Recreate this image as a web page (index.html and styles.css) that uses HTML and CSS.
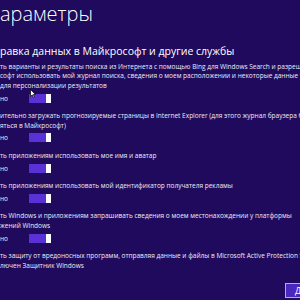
FILE: index.html
```html
<!DOCTYPE html>
<html>
<head>
	<title>Параметры</title>
	<link rel="stylesheet" href="styles.css">
</head>
<body>
	<div class="page">
		<h1 class="title">араметры</h1>
		<h2 class="heading">равка данных в Майкрософт и другие службы</h2>

		<div class="item">
			<p class="lines">ть варианты и результаты поиска из Интернета с помощью Bing для Windows Search и разрешить<br>софт использовать мой журнал поиска, сведения о моем расположении и некоторые данные учетной записи<br>для персонализации результатов</p>
			<div class="state"><span class="state-label">но</span><span class="toggle"><span class="thumb"></span></span></div>
		</div>

		<div class="item">
			<p class="lines">ительно загружать прогнозируемые страницы в Internet Explorer (для этого журнал браузера будет<br>яться в Майкрософт)</p>
			<div class="state"><span class="state-label">но</span><span class="toggle"><span class="thumb"></span></span></div>
		</div>

		<div class="item">
			<p class="lines">ть приложениям использовать мое имя и аватар</p>
			<div class="state"><span class="state-label">но</span><span class="toggle"><span class="thumb"></span></span></div>
		</div>

		<div class="item">
			<p class="lines">ть приложениям использовать мой идентификатор получателя рекламы</p>
			<div class="state"><span class="state-label">но</span><span class="toggle"><span class="thumb"></span></span></div>
		</div>

		<div class="item">
			<p class="lines">ть Windows и приложениям запрашивать сведения о моем местонахождении у платформы<br>жений Windows</p>
			<div class="state"><span class="state-label">но</span><span class="toggle"><span class="thumb"></span></span></div>
		</div>

		<div class="item">
			<p class="lines">ть защиту от вредоносных программ, отправляя данные и файлы в Microsoft Active Protection Service<br>лючен Защитник Windows</p>
		</div>

		<div class="footer">
			<button class="next">Далее</button>
		</div>
	</div>

	<svg class="cursor" width="6" height="9" viewBox="0 0 6 9">
		<path d="M0.5 0.5 L0.5 7.5 L2.2 5.9 L3.4 8.5 L4.4 8 L3.3 5.5 L5.5 5.5 Z" fill="#ffffff" stroke="#000000" stroke-width="0.7"/>
	</svg>
</body>
</html>
```

FILE: styles.css
```css
body {
	margin: 0;
	overflow: hidden;
	background-color: #1f0a5e;
	font-family: "Open Sans", "Noto Sans", sans-serif;
	color: #ffffff;
}
.page {
	position: relative;
	width: 300px;
	height: 300px;
	white-space: nowrap;
}
.title {
	margin: 2px 0 0 0;
	font-size: 20px;
	line-height: 24px;
	font-weight: 300;
}
.heading {
	margin: 19px 0 0 0;
	font-size: 10.5px;
	line-height: 13px;
	font-weight: 400;
}
.item {
	margin-bottom: 8.4px;
	color: #eeebf6;
}
.item:first-of-type {
	margin-top: 4px;
}
.lines {
	margin: 0;
	font-size: 6.5px;
	line-height: 9.4px;
}
.state {
	display: flex;
	align-items: center;
	height: 9px;
	margin-top: 3.5px;
	font-size: 6.5px;
}
.state-label {
	width: 29px;
}
.toggle {
	display: flex;
	justify-content: flex-end;
	width: 22px;
	height: 9px;
	background-color: #5a31d6;
}
.thumb {
	width: 5px;
	height: 9px;
	background-color: #ffffff;
}
.footer {
	display: flex;
	justify-content: flex-end;
	margin-top: 13px;
}
.next {
	width: 55px;
	height: 15px;
	margin-right: -40px;
	padding: 0 0 0 9px;
	text-align: left;
	font-family: inherit;
	font-size: 9px;
	color: #ffffff;
	background-color: #4a27bf;
	border: 1px solid #b4a8e6;
}
.cursor {
	position: absolute;
	left: 30px;
	top: 89px;
}
```
